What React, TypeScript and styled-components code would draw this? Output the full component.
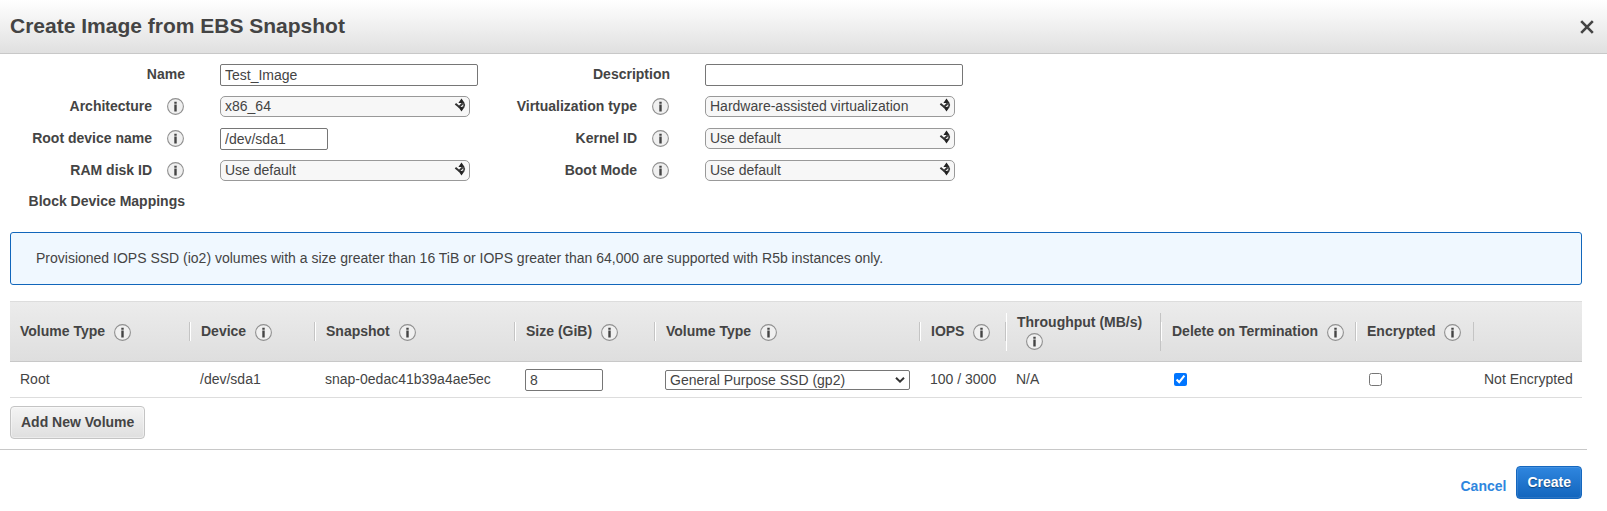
import React, { useState } from "react";
import styled, { createGlobalStyle, css } from "styled-components";

const GlobalStyle = createGlobalStyle`
  *, *::before, *::after { box-sizing: border-box; }
  body {
    margin: 0;
    background: #fff;
    color: #444;
    font: 14px/19px "Liberation Sans", Arial, sans-serif;
  }
  button, input, select { font: inherit; color: inherit; }
`;

const Header = styled.header`
  display: flex;
  align-items: center;
  justify-content: space-between;
  height: 54px;
  padding: 0 10px;
  border-bottom: 1px solid #c8c8c8;
  background: linear-gradient(#fff, #e0e0e0);
`;

const Title = styled.h1`
  margin: 0;
  padding-bottom: 2px;
  font-size: 21px;
  line-height: 26px;
`;

const CloseButton = styled.button`
  display: flex;
  padding: 3px;
  border: 0;
  background: none;
  cursor: pointer;
`;

const Body = styled.main`
  padding: 5px 25px 10px 10px;
`;

const FormGrid = styled.div`
  display: grid;
  grid-template-columns: repeat(2, 485px);
  grid-auto-rows: 32px;
  margin-left: -10px;
`;

const Field = styled.div`
  display: grid;
  grid-template-columns: 185px 258px;
  column-gap: 35px;
  align-items: start;
  padding-top: 5px;
`;

const LabelCell = styled.div<{ $info?: boolean }>`
  display: flex;
  align-items: center;
  justify-content: flex-end;
  gap: 15px;
  height: 21px;
  padding-right: ${(p) => (p.$info ? "1px" : "0")};
  font-weight: bold;
`;

const SectionLabel = styled.h2`
  width: 175px;
  margin: 5px 0 21px;
  font-size: 14px;
  line-height: 19px;
  text-align: right;
`;

const TextInput = styled.input<{ $width: string }>`
  width: ${(p) => p.$width};
  height: 22px;
  padding: 1px 4px;
  border: 1px solid #767676;
  border-radius: 2px;
  background: #fff;
`;

const SelectWrap = styled.div<{ $width: string }>`
  position: relative;
  width: ${(p) => p.$width};
`;

const Select = styled.select<{ $plain?: boolean }>`
  appearance: none;
  display: block;
  width: 100%;
  padding: 0 24px 0 4px;
  border: 1px solid #999;
  ${(p) =>
    p.$plain
      ? css`
          height: 20px;
          border-color: #767676;
          border-radius: 2px;
          background: #fff;
        `
      : css`
          height: 21px;
          border-radius: 5px;
          background: #f7f7f7;
        `}
`;

const SelectMark = styled.svg`
  position: absolute;
  top: 2px;
  right: 4px;
  pointer-events: none;
`;

const Notice = styled.p`
  margin: 0 0 16px;
  padding: 16px 25px;
  border: 1px solid #1166bb;
  border-radius: 3px;
  background: #f0f8ff;
`;

const Table = styled.table`
  width: 100%;
  table-layout: fixed;
  border-collapse: separate;
  border-spacing: 0;
`;

const HeadRow = styled.tr`
  height: 61px;
  background: linear-gradient(#ececec, #dedede);
`;

const HeadCell = styled.th`
  padding: 0;
  border-top: 1px solid #ddd;
  border-bottom: 1px solid #c8c8c8;
  text-align: left;
  vertical-align: middle;
`;

const HeadInner = styled.div<{ $first?: boolean; $last?: boolean }>`
  min-height: 19px;
  padding: 0 10px;
  border-left: ${(p) => (p.$first || p.$last ? "0" : "1px solid #fff")};
  border-right: ${(p) => (p.$last ? "0" : "1px solid #c4c4c4")};

  svg {
    margin-left: 9px;
    vertical-align: middle;
  }
`;

const Cell = styled.td<{ $inset?: boolean }>`
  height: 36px;
  padding: 0 0 0 ${(p) => (p.$inset ? "11px" : "10px")};
  border-bottom: 1px solid #ddd;
  white-space: nowrap;
  vertical-align: middle;
`;

const CheckBox = styled.input`
  display: block;
  width: 13px;
  height: 13px;
  margin: 0 2px;
`;

const SecondaryButton = styled.button`
  display: block;
  height: 33px;
  margin-top: 8px;
  padding: 0 10px;
  border: 1px solid #c4c4c4;
  border-radius: 4px;
  background: linear-gradient(#f4f4f4, #dfdfdf);
  box-shadow: inset 0 0 0 1px #ffffff66;
  font-weight: bold;
  cursor: pointer;
`;

const Footer = styled.footer`
  display: flex;
  justify-content: flex-end;
  align-items: center;
  gap: 10px;
  margin-right: 20px;
  padding: 16px 5px 12px 0;
  border-top: 1px solid #c8c8c8;
`;

const CancelLink = styled.a`
  padding-top: 7px;
  color: #2e86de;
  font-weight: bold;
  text-decoration: none;
`;

const PrimaryButton = styled.button`
  height: 33px;
  padding: 0 10px;
  border: 1px solid #1567be;
  border-radius: 4px;
  background: linear-gradient(#2f86df, #1265bd);
  box-shadow: inset 0 0 0 1px #ffffff1a;
  color: #fff;
  font-weight: bold;
  text-shadow: 0 1px 1px #00000066;
  cursor: pointer;
`;

const InfoIcon = () => (
  <svg width="17" height="17" viewBox="0 0 17 17" role="img" aria-label="Info">
    <circle cx="8.5" cy="8.5" r="7.9" fill="#f0f0f0" stroke="#909090" strokeWidth="1.1" />
    <path d="M7.3 3.8h2.4v2h-2.4zM7.3 6.6h2.4v6.8h-2.4z" fill="#444" />
  </svg>
);

const SorterMark = () => (
  <SelectMark width="12" height="14" viewBox="0 0 12 14" aria-hidden="true">
    <path d="M7.5 0.6L10.6 5H4.4zM4.4 9H10.6L7.5 13.4z" fill="#222" />
    <path d="M1.4 5.8L5.2 9L8.6 5.4" fill="none" stroke="#333" strokeWidth="2" />
    <path d="M8.2 5.4C10.8 5 11 8.6 8.6 8.8" fill="none" stroke="#444" strokeWidth="1.7" />
  </SelectMark>
);

const ChevronMark = () => (
  <SelectMark width="12" height="16" viewBox="0 0 12 16" aria-hidden="true">
    <path d="M2 5.8L6 9.6L10 5.8" fill="none" stroke="#333" strokeWidth="2" />
  </SelectMark>
);

type FieldSpec = {
  id: string;
  label: string;
  kind: "text" | "select";
  value: string;
  info?: boolean;
  width: string;
};

const fields: FieldSpec[] = [
  { id: "name", label: "Name", kind: "text", value: "Test_Image", width: "258px" },
  { id: "description", label: "Description", kind: "text", value: "", width: "258px" },
  { id: "arch", label: "Architecture", kind: "select", value: "x86_64", info: true, width: "250px" },
  { id: "virt", label: "Virtualization type", kind: "select", value: "Hardware-assisted virtualization", info: true, width: "250px" },
  { id: "root", label: "Root device name", kind: "text", value: "/dev/sda1", info: true, width: "108px" },
  { id: "kernel", label: "Kernel ID", kind: "select", value: "Use default", info: true, width: "250px" },
  { id: "ram", label: "RAM disk ID", kind: "select", value: "Use default", info: true, width: "250px" },
  { id: "boot", label: "Boot Mode", kind: "select", value: "Use default", info: true, width: "250px" },
];

const columns = [
  { label: "Volume Type", width: 180 },
  { label: "Device", width: 125 },
  { label: "Snapshot", width: 200 },
  { label: "Size (GiB)", width: 140 },
  { label: "Volume Type", width: 265 },
  { label: "IOPS", width: 86 },
  { label: "Throughput (MB/s)", width: 155 },
  { label: "Delete on Termination", width: 195 },
  { label: "Encrypted", width: 118 },
  { label: "", width: 108 },
];

function FormField({ spec }: { spec: FieldSpec }) {
  return (
    <Field>
      <LabelCell $info={spec.info}>
        <label htmlFor={spec.id}>{spec.label}</label>
        {spec.info && <InfoIcon />}
      </LabelCell>
      {spec.kind === "text" ? (
        <TextInput id={spec.id} type="text" defaultValue={spec.value} $width={spec.width} />
      ) : (
        <SelectWrap $width={spec.width}>
          <Select id={spec.id} defaultValue={spec.value}>
            <option>{spec.value}</option>
          </Select>
          <SorterMark />
        </SelectWrap>
      )}
    </Field>
  );
}

export default function App() {
  const [deleteOnTermination, setDeleteOnTermination] = useState(true);
  const [encrypted, setEncrypted] = useState(false);

  return (
    <>
      <GlobalStyle />
      <Header>
        <Title>Create Image from EBS Snapshot</Title>
        <CloseButton type="button" aria-label="Close">
          <svg width="14" height="14" viewBox="0 0 14 14" aria-hidden="true">
            <path d="M1.2 1.2L12.8 12.8M12.8 1.2L1.2 12.8" stroke="#444" strokeWidth="2.6" />
          </svg>
        </CloseButton>
      </Header>
      <Body>
        <FormGrid>
          {fields.map((f) => (
            <FormField key={f.id} spec={f} />
          ))}
        </FormGrid>
        <SectionLabel>Block Device Mappings</SectionLabel>
        <Notice>
          Provisioned IOPS SSD (io2) volumes with a size greater than 16 TiB or IOPS greater than
          64,000 are supported with R5b instances only.
        </Notice>
        <Table>
          <colgroup>
            {columns.map((c, i) => (
              <col key={i} width={c.width} />
            ))}
          </colgroup>
          <thead>
            <HeadRow>
              {columns.map((c, i) => (
                <HeadCell key={i} scope="col">
                  <HeadInner $first={i === 0} $last={i === columns.length - 1}>
                    {c.label}
                    {c.label && <InfoIcon />}
                  </HeadInner>
                </HeadCell>
              ))}
            </HeadRow>
          </thead>
          <tbody>
            <tr>
              <Cell>Root</Cell>
              <Cell>/dev/sda1</Cell>
              <Cell>snap-0edac41b39a4ae5ec</Cell>
              <Cell>
                <TextInput type="text" aria-label="Size (GiB)" defaultValue="8" $width="78px" />
              </Cell>
              <Cell>
                <SelectWrap $width="245px">
                  <Select $plain aria-label="Volume Type" defaultValue="General Purpose SSD (gp2)">
                    <option>General Purpose SSD (gp2)</option>
                  </Select>
                  <ChevronMark />
                </SelectWrap>
              </Cell>
              <Cell>100 / 3000</Cell>
              <Cell>N/A</Cell>
              <Cell $inset>
                <CheckBox
                  type="checkbox"
                  aria-label="Delete on Termination"
                  checked={deleteOnTermination}
                  onChange={(e) => setDeleteOnTermination(e.target.checked)}
                />
              </Cell>
              <Cell $inset>
                <CheckBox
                  type="checkbox"
                  aria-label="Encrypted"
                  checked={encrypted}
                  onChange={(e) => setEncrypted(e.target.checked)}
                />
              </Cell>
              <Cell>Not Encrypted</Cell>
            </tr>
          </tbody>
        </Table>
        <SecondaryButton type="button">Add New Volume</SecondaryButton>
      </Body>
      <Footer>
        <CancelLink href="#">Cancel</CancelLink>
        <PrimaryButton type="button">Create</PrimaryButton>
      </Footer>
    </>
  );
}
